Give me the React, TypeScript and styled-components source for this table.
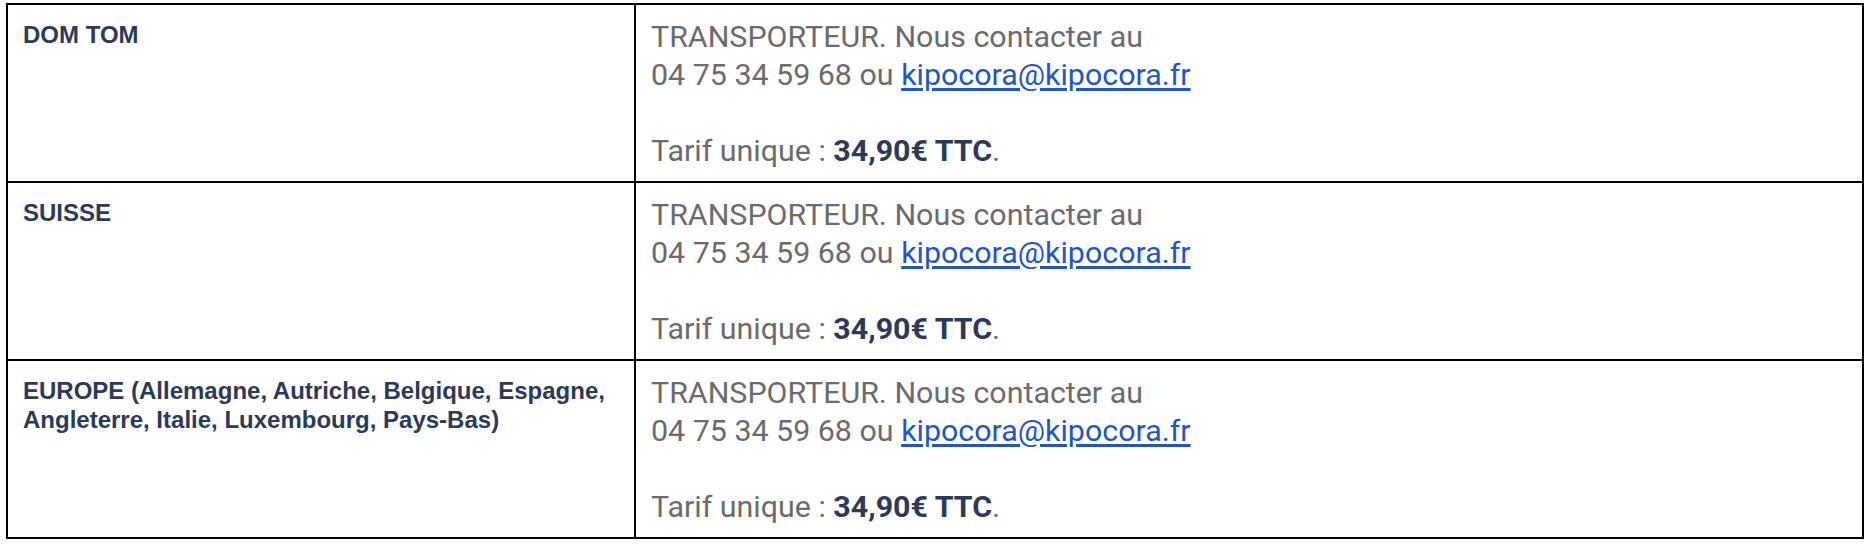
import React from "react";
import styled, { createGlobalStyle } from "styled-components";

const GlobalStyle = createGlobalStyle`
  html, body { margin: 0; padding: 0; background: #ffffff; }
  body { font-family: "Liberation Sans", Arial, sans-serif; }
`;

const Page = styled.div`
  padding: 3px 8px 8px 6px;
`;

const Table = styled.div`
  display: grid;
  grid-template-columns: 628px 1fr;
  width: 1858px;
  box-sizing: border-box;
  border: 2px solid #000;
`;

const Cell = styled.div<{ $last?: boolean; $left?: boolean }>`
  box-sizing: border-box;
  padding: 13px 14px 11px 15px;
  border-bottom: ${(p) => (p.$last ? "none" : "2px solid #000")};
  border-right: ${(p) => (p.$left ? "2px solid #000" : "none")};
`;

const Region = styled.div`
  font-family: "Liberation Sans", Arial, sans-serif;
  font-weight: 700;
  font-size: 24px;
  line-height: 29px;
  padding-top: 2px;
  color: #2c3a59;
`;

const Info = styled.div`
  font-family: Roboto, "Liberation Sans", sans-serif;
  font-size: 30.4px;
  line-height: 38px;
  color: #6b6b6b;
`;

const Mail = styled.a`
  color: #2356c4;
  text-decoration: underline;
  text-underline-offset: 3px;
`;

const Price = styled.strong`
  font-weight: 700;
  color: #2c3a59;
`;

const rows = [
  "DOM TOM",
  "SUISSE",
  "EUROPE (Allemagne, Autriche, Belgique, Espagne, Angleterre, Italie, Luxembourg, Pays-Bas)",
];

export default function App() {
  return (
    <>
      <GlobalStyle />
      <Page>
        <Table>
          {rows.map((r, i) => {
            const last = i === rows.length - 1;
            return (
              <React.Fragment key={r}>
                <Cell $left $last={last}>
                  <Region>{r}</Region>
                </Cell>
                <Cell $last={last}>
                  <Info>
                    TRANSPORTEUR. Nous contacter au
                    <br />
                    04 75 34 59 68 ou <Mail href="mailto:kipocora@kipocora.fr">kipocora@kipocora.fr</Mail>
                    <br />
                    <br />
                    Tarif unique : <Price>34,90€ TTC</Price>.
                  </Info>
                </Cell>
              </React.Fragment>
            );
          })}
        </Table>
      </Page>
    </>
  );
}
